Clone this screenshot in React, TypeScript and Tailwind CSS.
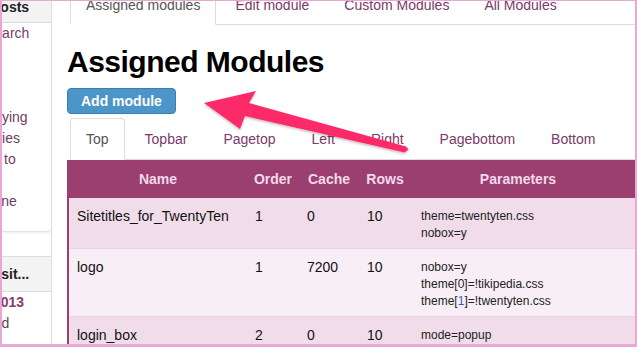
import React from 'react';

const rows = [
  { name: 'Sitetitles_for_TwentyTen', order: '1', cache: '0', rows: '10', params: [['theme=twentyten.css'], ['nobox=y']] },
  { name: 'logo', order: '1', cache: '7200', rows: '10', params: [['nobox=y'], ['theme[0]=!tikipedia.css'], ['theme[', '1', ']=!twentyten.css']] },
  { name: 'login_box', order: '2', cache: '0', rows: '10', params: [['mode=popup']] },
];

const subTabs = ['Top', 'Topbar', 'Pagetop', 'Left', 'Right', 'Pagebottom', 'Bottom'];
const topTabs = ['Assigned modules', 'Edit module', 'Custom Modules', 'All Modules'];

function Sidebar() {
  return (
    <div className="w-[50px] shrink-0 border-r border-[#dddddd] overflow-hidden text-[14px]">
      <div className="h-[24px] bg-[#f3f3f3] border-b border-[#dddddd]">
        <div className="-ml-[11px] -mt-[2px] leading-[16px] font-bold text-[#222] whitespace-nowrap">Posts</div>
      </div>
      <div className="bg-white pb-[19px] border-b border-[#e4e4e4] rounded-br-[4px] shadow-[1px_1px_3px_rgba(0,0,0,0.08)] leading-[21px] whitespace-nowrap text-[#6d3b64]">
        <div className="-ml-[17px] text-[#7b3a6c]">Search</div>
        <div>&nbsp;</div>
        <div>&nbsp;</div>
        <div>&nbsp;</div>
        <div className="-ml-[39px]">Displaying</div>
        <div className="-ml-[24px]">entries</div>
        <div className="ml-[2px]">to</div>
        <div className="-ml-[2px] text-[10px] text-[#a9a9d6]">:</div>
        <div className="-ml-[7px]">line</div>
      </div>
      <div className="mt-[24px] h-[36px] bg-[#f3f3f3] border-y border-[#dddddd]">
        <div className="-ml-[49px] leading-[34px] font-bold text-[#222] whitespace-nowrap">Composit...</div>
      </div>
      <div className="bg-white leading-[21px] whitespace-nowrap">
        <div className="-ml-[9px] font-bold text-[#8b3a6e]">2013</div>
        <div className="-ml-[16px] text-[#5a4656]">and</div>
      </div>
    </div>
  );
}

function Arrow() {
  return (
    <svg className="absolute inset-0 pointer-events-none" width="637" height="347" viewBox="0 0 637 347">
      <defs>
        <filter id="sh" x="-10%" y="-10%" width="120%" height="140%">
          <feDropShadow dx="0" dy="1.5" stdDeviation="1.2" floodColor="#000" floodOpacity="0.25" />
        </filter>
      </defs>
      <polygon
        points="202,102 254,90 247,102 404,145.5 406.5,148.5 402.5,151.5 243,115 238,128"
        fill="#fd2c6b"
        strokeLinejoin="round"
        filter="url(#sh)"
      />
    </svg>
  );
}

export default function App() {
  return (
    <div className="relative w-[637px] h-[347px] overflow-hidden bg-white border-l-2 border-r-2 border-t border-b-[3px] border-[#e9a7d3] flex font-['Liberation_Sans',Arial,sans-serif]">
      <Sidebar />

      <div className="flex-1 pl-[15px] min-w-0">
        {/* top tabs */}
        <div className="-mt-[15px] ml-[3px] flex border-b border-[#dddddd] text-[14px] whitespace-nowrap">
          {topTabs.map((t, i) => (
            <div
              key={t}
              className={
                i === 0
                  ? 'px-[15px] py-[8px] leading-5 border border-[#dddddd] border-b-transparent bg-white -mb-px mr-[3px] rounded-t-[4px] text-[#555]'
                  : 'px-[15px] py-[8px] leading-5 border border-transparent mr-[3px] text-[#7a3a6a]'
              }
            >
              {t}
            </div>
          ))}
        </div>

        <h1 className="mt-[19px] text-[30px] leading-[36px] font-bold tracking-[-0.5px] text-black">Assigned Modules</h1>

        <button className="mt-[8px] h-[26px] px-[13px] rounded-[4px] bg-[#4b95c8] border border-[#3a7eb0] text-white font-bold text-[14px] leading-[24px] block">
          Add module
        </button>

        {/* position tabs */}
        <div className="mt-[4px] ml-[3px] flex border-b border-[#dddddd] text-[14px] whitespace-nowrap">
          {subTabs.map((t, i) => (
            <div
              key={t}
              className={
                i === 0
                  ? 'px-[15px] pt-[10px] pb-[10px] leading-5 border border-[#dddddd] border-b-transparent bg-white -mb-px mr-[4px] rounded-t-[4px] text-[#555]'
                  : 'px-[15px] pt-[10px] pb-[10px] leading-5 border border-transparent -mb-px mr-[4px] text-[#7a3a6a]'
              }
            >
              {t}
            </div>
          ))}
        </div>

        {/* modules table */}
        <div className="border-l-2 border-[#9b3f70] text-[14px]">
          <div className="grid grid-cols-[178px_52px_60px_52px_1fr] h-[38px] bg-[#9b3f70] text-[#f3d9ea] font-bold leading-[38px] text-center">
            <div>Name</div>
            <div>Order</div>
            <div>Cache</div>
            <div>Rows</div>
            <div className="pr-[10px]">Parameters</div>
          </div>
          {rows.map((r, i) => (
            <div
              key={r.name}
              className={`grid grid-cols-[178px_52px_60px_52px_1fr] pt-[10px] pb-[6px] border-b border-[#e9d3e2] text-[#111] ${
                i % 2 === 0 ? 'bg-[#f0dde9]' : 'bg-[#f7eff5]'
              }`}
            >
              <div className="pl-[8px] leading-[17px]">{r.name}</div>
              <div className="pl-[8px] leading-[17px]">{r.order}</div>
              <div className="pl-[8px] leading-[17px]">{r.cache}</div>
              <div className="pl-[8px] leading-[17px]">{r.rows}</div>
              <div className="pl-[10px] text-[12px] leading-[17px] text-[#222]">
                {r.params.map((p, j) => (
                  <div key={j}>
                    {p.length === 3 ? (
                      <>
                        {p[0]}
                        <span className="text-[#3b5ba5]">{p[1]}</span>
                        {p[2]}
                      </>
                    ) : (
                      p[0]
                    )}
                  </div>
                ))}
              </div>
            </div>
          ))}
        </div>
      </div>

      <Arrow />
    </div>
  );
}
